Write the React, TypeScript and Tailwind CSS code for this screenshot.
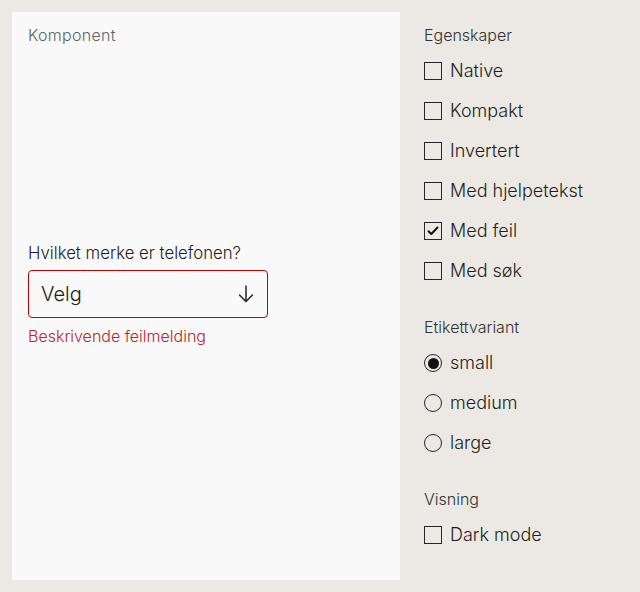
import React from "react";

const font = { fontFamily: "Inter, 'Liberation Sans', Arial, sans-serif" };

function Check({ label, checked }: { label: string; checked?: boolean }) {
  return (
    <div className="flex h-10 items-center gap-2">
      <span className="flex h-[18px] w-[18px] items-center justify-center border-[1.5px] border-[#23262a] bg-transparent">
        {checked && (
          <svg width="12" height="10" viewBox="0 0 12 10" fill="none">
            <path d="M1.5 5.2 L4.3 8 L10.5 1.5" stroke="#111" strokeWidth="2" strokeLinecap="round" strokeLinejoin="round" />
          </svg>
        )}
      </span>
      <span className="text-[18px] font-light leading-6 text-[#1c1e21]">{label}</span>
    </div>
  );
}

function Radio({ label, checked }: { label: string; checked?: boolean }) {
  return (
    <div className="flex h-10 items-center gap-2">
      <span className="flex h-[18px] w-[18px] items-center justify-center rounded-full border-[1.5px] border-[#23262a]">
        {checked && <span className="h-[11px] w-[11px] rounded-full bg-[#111]" />}
      </span>
      <span className="text-[18px] font-light leading-6 text-[#1c1e21]">{label}</span>
    </div>
  );
}

function Group({ legend, children }: { legend: string; children: React.ReactNode }) {
  return (
    <div className="flex flex-col gap-1">
      <div className="text-[16px] font-light leading-6 text-[#2e3135]">{legend}</div>
      <div className="flex flex-col">{children}</div>
    </div>
  );
}

export default function App() {
  return (
    <div style={font} className="flex h-[592px] w-[640px] bg-[#ece9e4] p-3">
      <div className="flex w-[388px] flex-col bg-[#f9f9f9] px-4 pb-4 pt-[11px]">
        <div className="text-[16px] font-light leading-6 tracking-[0.3px] text-[#5f6368]">Komponent</div>
        <div className="flex flex-1 flex-col justify-center pb-[22px]">
          <div className="text-[16.8px] font-light leading-6 text-[#1c1e21]">Hvilket merke er telefonen?</div>
          <div className="mt-[5px] flex h-12 w-[240px] items-center justify-between rounded-[4px] border border-[#c30000] bg-[#f9f9f9] pl-3 pr-[13px]">
            <span className="text-[20px] font-light leading-7 text-[#1c1e21]">Velg</span>
            <svg width="16" height="18" viewBox="0 0 16 18" fill="none">
              <path d="M8 1 V16.5 M1.5 10 L8 16.5 L14.5 10" stroke="#23262a" strokeWidth="1.5" strokeLinecap="round" strokeLinejoin="round" />
            </svg>
          </div>
          <div className="mt-[6px] text-[16px] font-light leading-6 text-[#c0232b]">Beskrivende feilmelding</div>
        </div>
      </div>
      <div className="flex flex-col gap-6 pl-6 pt-[11px]">
        <Group legend="Egenskaper">
          <Check label="Native" />
          <Check label="Kompakt" />
          <Check label="Invertert" />
          <Check label="Med hjelpetekst" />
          <Check label="Med feil" checked />
          <Check label="Med søk" />
        </Group>
        <Group legend="Etikettvariant">
          <Radio label="small" checked />
          <Radio label="medium" />
          <Radio label="large" />
        </Group>
        <Group legend="Visning">
          <Check label="Dark mode" />
        </Group>
      </div>
    </div>
  );
}
